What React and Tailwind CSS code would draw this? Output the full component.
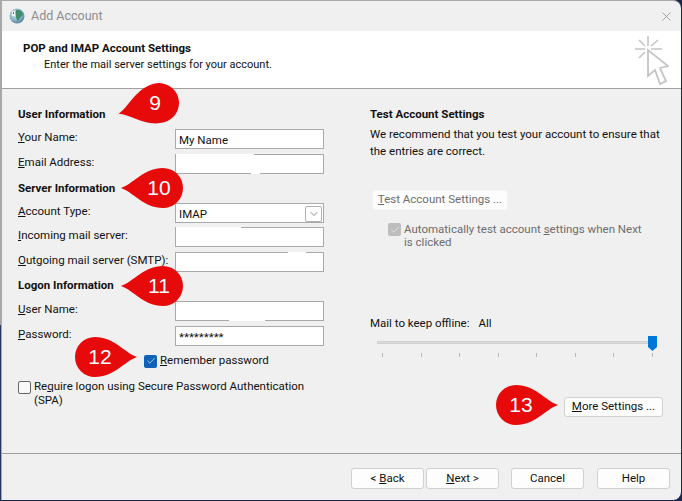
import React from 'react';
import { X, ChevronDown, Check } from 'lucide-react';

// red callout with a number, tip points left or right
function Drop({ n, className, dir = 'left', tilt = 0 }) {
  const angle = dir === 'left' ? tilt : 180;
  return (
    <div className={`absolute w-[64px] h-[40px] ${className}`}>
      <svg viewBox="0 0 64 40" className="absolute left-0 top-0 w-[64px] h-[40px] overflow-visible">
        <g transform={`rotate(${angle} ${dir === 'left' ? '44 20' : '32 20'})`}>
          <path d="M2 20C14 16 25 0 44 0A20 20 0 0 1 44 40C25 40 14 24 2 20Z" fill="#e60a0a" />
        </g>
      </svg>
      <span
        className={`absolute top-0 h-[40px] w-[40px] flex items-center justify-center text-white text-[21px] font-['Liberation_Sans',sans-serif] ${
          dir === 'left' ? 'left-[20px]' : 'left-[5px]'
        }`}
      >
        {n}
      </span>
    </div>
  );
}

function Field({ k, rest, value, children }) {
  return (
    <div className="flex items-start h-[25px]">
      <span className="w-[157px] pt-[1px] leading-[15px] whitespace-nowrap">
        <u>{k}</u>{rest}
      </span>
      <div className="relative w-[149px] h-[20px] bg-white border border-[#a9a9a9] pl-[3px] pt-[1px] leading-[18px]">
        {value}
        {children}
      </div>
    </div>
  );
}

function Btn({ children, className }) {
  return (
    <button className={`h-[20px] bg-[#fdfdfd] border border-[#d0d0d0] rounded-[3px] flex items-center justify-center ${className}`}>
      {children}
    </button>
  );
}

function Heading({ children, className }) {
  return <div className={`font-bold leading-[16px] ${className}`}>{children}</div>;
}

export default function App() {
  const ticks = [0, 1, 2, 3, 4, 5, 6, 7];
  return (
    <div className="relative w-[682px] h-[501px] bg-[#1c2750] overflow-hidden text-[11.5px] text-[#111] font-['Roboto',sans-serif]">
      <div className="w-[681px] h-[500px] flex flex-col bg-[#f0f0f0] border-t border-l-2 border-[#a8a8a8] rounded-tr-[8px] rounded-br-[8px]">
        {/* Title bar */}
        <div className="h-[30px] shrink-0 flex items-center pl-[7px] pr-[7px]">
          <svg viewBox="0 0 16 16" className="w-[16px] h-[16px]">
            <defs>
              <radialGradient id="globe" cx="0.4" cy="0.35" r="0.75">
                <stop offset="0" stopColor="#dbe8f0" />
                <stop offset="0.6" stopColor="#86b0c8" />
                <stop offset="1" stopColor="#3f6f90" />
              </radialGradient>
            </defs>
            <circle cx="8" cy="8" r="7.5" fill="url(#globe)" />
            <path d="M7 2c3-1 6 1 7 4 0 2-2 2-3 4-1 1-2 3-3 3 0-2-1-3-1-4 0-2-1-4 0-7z" fill="#3f8d6a" />
            <path d="M3 3h3v5H3z" fill="#f2f5f8" />
            <path d="M4 4h1v2H4z" fill="#d03a3a" />
          </svg>
          <span className="ml-[6px] text-[12.5px] text-[#8d8d8d]">Add Account</span>
          <X size={15} strokeWidth={1} className="ml-auto text-[#777]" />
        </div>

        {/* Header */}
        <div className="h-[58px] shrink-0 bg-white border-b border-[#a0a0a0] flex justify-between pl-[21px] pr-[12px] pt-[9px]">
          <div>
            <div className="font-bold leading-[16px]">POP and IMAP Account Settings</div>
            <div className="pl-[21px] pt-[1px] text-[11px] leading-[15px]">Enter the mail server settings for your account.</div>
          </div>
          <svg viewBox="0 0 34 50" className="w-[34px] h-[50px] -mt-[4px]" fill="none" stroke="#c4c4c4">
            <path d="M13 0v10M0 13h10M16 13h11M4 4l6 6M23 4l-7 6M4 22l6-6" strokeWidth="1.6" />
            <path d="M13 14v26l7-6 5 14 6-3-6-13 8-2z" fill="#fff" strokeWidth="1.8" />
          </svg>
        </div>

        {/* Body */}
        <div className="flex-1 flex min-h-0">
          <div className="w-[368px] pl-[16px] pt-[17px] shrink-0">
            <Heading className="mb-[7px]">User Information</Heading>
            <Field k="Y" rest="our Name:" value="My Name" />
            <Field k="E" rest="mail Address:">
              <span className="absolute -top-[1px] left-0 h-[3px] w-[78px] bg-white" />
              <span className="absolute -bottom-[1px] left-[75px] h-[3px] w-[9px] bg-white" />
            </Field>
            <Heading className="mt-[1px] mb-[7px]">Server Information</Heading>
            <div className="flex items-start h-[24px]">
              <span className="w-[157px] pt-[1px] leading-[15px]"><u>A</u>ccount Type:</span>
              <div className="w-[149px] h-[20px] bg-white border border-[#a9a9a9] pl-[3px] pt-[1px] leading-[18px] flex items-center justify-between pr-[1px]">
                IMAP
                <span className="w-[17px] h-[16px] border border-[#b0b0b0] rounded-[2px] flex items-center justify-center">
                  <ChevronDown size={12} strokeWidth={1} />
                </span>
              </div>
            </div>
            <Field k="I" rest="ncoming mail server:">
              <span className="absolute -top-[1px] left-0 h-[3px] w-[65px] bg-white" />
            </Field>
            <Field k="O" rest="utgoing mail server (SMTP):">
              <span className="absolute -top-[1px] left-[112px] h-[3px] w-[18px] bg-white" />
            </Field>
            <Heading className="mb-[8px]">Logon Information</Heading>
            <Field k="U" rest="ser Name:">
              <span className="absolute -bottom-[1px] left-[53px] h-[3px] w-[36px] bg-white" />
            </Field>
            <Field k="P" rest="assword:" value="*********" />
            <div className="flex items-center h-[16px] mt-[2px] pl-[126px]">
              <span className="w-[13px] h-[13px] rounded-[2px] bg-[#0f62b5] flex items-center justify-center text-white">
                <Check size={10} strokeWidth={1.5} />
              </span>
              <span className="ml-[3px]"><u>R</u>emember password</span>
            </div>
            <div className="flex items-start mt-[11px]">
              <span className="w-[13px] h-[13px] mt-[1px] shrink-0 rounded-[2px] bg-[#f8f8f8] border border-[#666]" />
              <span className="ml-[3px] leading-[13.5px] w-[285px]">Re<u>q</u>uire logon using Secure Password Authentication (SPA)</span>
            </div>
          </div>

          <div className="flex-1 pt-[17px] pr-[18px] flex flex-col">
            <Heading className="mb-[4px]">Test Account Settings</Heading>
            <p className="leading-[17px] w-[290px]">We recommend that you test your account to ensure that the entries are correct.</p>
            <Btn className="w-[136px] h-[19px] ml-[2px] mt-[30px] bg-[#f9f9f9] border-[#f5f5f5] text-[#6d6d6d]">
              <span><u>T</u>est Account Settings ...</span>
            </Btn>
            <div className="flex items-start pl-[18px] mt-[13px] text-[#6d6d6d]">
              <span className="w-[13px] h-[13px] shrink-0 rounded-[2px] bg-[#bdbdbd] flex items-center justify-center text-white">
                <Check size={10} strokeWidth={1.5} />
              </span>
              <span className="ml-[3px] leading-[13px] w-[240px]">Automatically test account <u>s</u>ettings when Next is clicked</span>
            </div>
            <div className="mt-[67px] leading-[15px]">Mail to keep offline:<span className="ml-[9px]">All</span></div>
            {/* slider */}
            <div className="relative h-[24px] mt-[7px] ml-[7px] w-[280px]">
              <div className="absolute left-0 right-[4px] top-[3px] h-[3px] bg-[#dcdcdc] border border-[#d0d0d0]" />
              <svg viewBox="0 0 9 15" className="absolute right-0 top-[-2px] w-[9px] h-[15px]">
                <path d="M0 0h9v11l-4.5 4L0 11z" fill="#0078d7" />
              </svg>
              <div className="absolute left-[5px] right-[4px] top-[15px] flex justify-between">
                {ticks.map(t => <span key={t} className="w-[1px] h-[4px] bg-[#b8b8b8]" />)}
              </div>
            </div>
            <div className="flex justify-end mt-[35px]">
              <Btn className="w-[99px]"><span><u>M</u>ore Settings ...</span></Btn>
            </div>
          </div>
        </div>

        {/* Footer */}
        <div className="h-[47px] shrink-0 border-t border-[#a0a0a0] flex items-start pt-[14px] pl-[349px]">
          <Btn className="w-[73px] h-[21px]"><span>&lt; <u>B</u>ack</span></Btn>
          <Btn className="w-[73px] h-[21px] ml-[2px]"><span><u>N</u>ext &gt;</span></Btn>
          <Btn className="w-[73px] h-[21px] ml-[12px]">Cancel</Btn>
          <Btn className="w-[73px] h-[21px] ml-[13px]">Help</Btn>
        </div>
      </div>

      <div className="absolute left-0 top-[325px] bottom-0 w-[1px] bg-[#2a3560]" />
      <Drop n="9" className="left-[115px] top-[83px]" tilt={-15} />
      <Drop n="10" className="left-[119px] top-[168px]" />
      <Drop n="11" className="left-[119px] top-[266px]" />
      <Drop n="12" className="left-[75px] top-[337px]" dir="right" />
      <Drop n="13" className="left-[496px] top-[385px]" dir="right" />
    </div>
  );
}
